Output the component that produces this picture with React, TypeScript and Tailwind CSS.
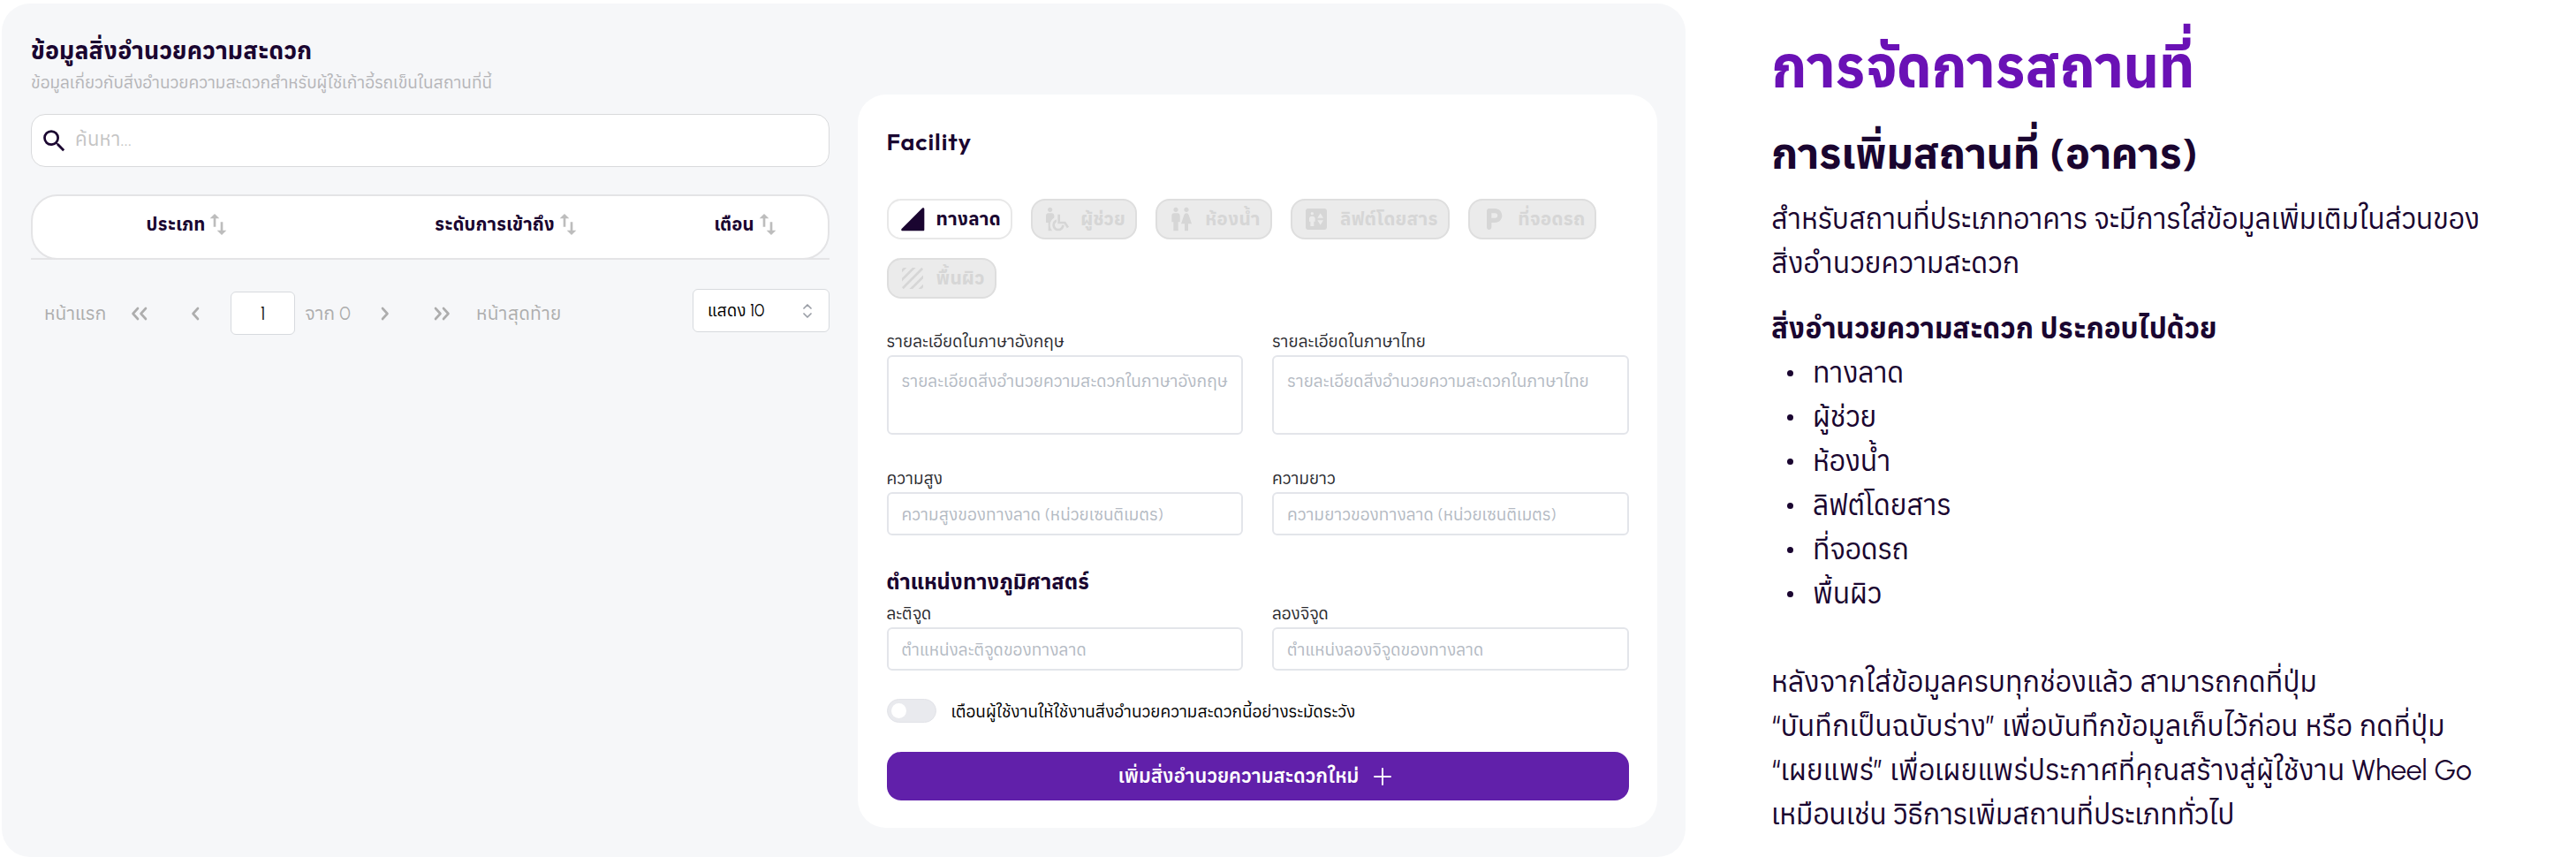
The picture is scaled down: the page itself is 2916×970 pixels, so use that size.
import type { ReactNode } from "react";
import { MdSearch, MdSwapVert, MdWheelchairPickup, MdWc, MdElevator, MdTexture } from "react-icons/md";

function RampIcon() {
  return (
    <svg viewBox="0 0 24 24" className="size-8 fill-current">
      <path d="M20.3 2.7 2.7 20.3c-.6.6-.2 1.700.7 1.700H21c.6 0 1-.4 1-1V3.400c0-.9-1.100-1.300-1.700-.7z" />
    </svg>
  );
}

function ParkingIcon() {
  return (
    <svg viewBox="0 0 24 24" className="size-8 fill-current">
      <path d="M13 3H8C6.900 3 6 3.900 6 5v14c0 1.100.9 2 2 2s2-.9 2-2v-4h3c3.300 0 6-2.700 6-6s-2.700-6-6-6zm.2 8H10V7h3.200c1.100 0 2 .9 2 2s-.9 2-2 2z" />
    </svg>
  );
}

const chips: { label: string; icon: ReactNode }[] = [
  { label: "ทางลาด", icon: <RampIcon /> },
  { label: "ผู้ช่วย", icon: <MdWheelchairPickup className="size-8" /> },
  { label: "ห้องน้ำ", icon: <MdWc className="size-8" /> },
  { label: "ลิฟต์โดยสาร", icon: <MdElevator className="size-8" /> },
  { label: "ที่จอดรถ", icon: <ParkingIcon /> },
  { label: "พื้นผิว", icon: <MdTexture className="size-8" /> },
];

function Chevron({ double = false, flip = false }: { double?: boolean; flip?: boolean }) {
  return (
    <svg
      viewBox={double ? "0 0 20 16" : "0 0 10 16"}
      className={`h-4 shrink-0 fill-none stroke-[#adadad] ${double ? "w-5" : "w-2.5"} ${flip ? "-scale-x-100" : ""}`}
      strokeWidth="2.6"
      strokeLinecap="round"
      strokeLinejoin="round"
    >
      <path d="M8 2 2.500 8 8 14" />
      {double && <path d="M17 2 11.500 8 17 14" />}
    </svg>
  );
}

function Field({ label, placeholder, tall = false }: { label: string; placeholder: string; tall?: boolean }) {
  return (
    <div className="flex flex-col whitespace-nowrap">
      <div className="text-[19px] leading-[30px] text-[#2b2b30]">{label}</div>
      <div
        className={`rounded-[6px] border-2 border-[#e3e5ea] bg-white px-[15px] text-[19px] leading-[28px] tracking-[0.05px] text-[#b4bac3] ${tall ? "h-[90px] pt-[14px]" : "h-[49px] pt-[9.500px]"}`}
      >
        {placeholder}
      </div>
    </div>
  );
}

function Column({ label }: { label: string }) {
  return (
    <div className="flex items-center justify-center">
      <span className="text-[20.500px] leading-[32px] font-bold tracking-[0.1px] whitespace-nowrap">{label}</span>
      <MdSwapVert className="-ml-px size-8 shrink-0 text-[#bdbdbd]" />
    </div>
  );
}

function FacilityList() {
  return (
    <section className="flex w-[904px] flex-col pt-[34px] whitespace-nowrap">
      <h2 className="text-[27px] leading-[40px] font-bold tracking-[0.15px]">ข้อมูลสิ่งอำนวยความสะดวก</h2>
      <p className="text-[19px] leading-[32px] text-[#b5b5b8]">ข้อมูลเกี่ยวกับสิ่งอำนวยความสะดวกสำหรับผู้ใช้เก้าอี้รถเข็นในสถานที่นี้</p>
      <div className="mt-[19px] flex h-[60px] items-center gap-[7px] rounded-[16px] border border-[#d9dadc] bg-white pl-[9px]">
        <MdSearch className="size-[33px]" />
        <span className="pb-[2px] text-[22px] leading-[32px] tracking-[0.3px] text-[#c4c4c4]">ค้นหา...</span>
      </div>
      <div className="mt-[31px] border-b-2 border-[#e4e4e6]">
        <div className="-mb-[2px] grid h-[74px] grid-cols-[355px_367px_175px] rounded-[30px] border-2 border-[#e4e4e6] bg-white pb-[6px]">
          <Column label="ประเภท" />
          <Column label="ระดับการเข้าถึง" />
          <Column label="เตือน" />
        </div>
      </div>
      <div className="mt-[33px] flex justify-between text-[21px] leading-[32px] text-[#adadad]">
        <div className="flex h-[52px] items-center pt-[3px] pl-[15px]">
          <div className="w-[98px]">หน้าแรก</div>
          <Chevron double />
          <div className="ml-[48px] flex">
            <Chevron />
          </div>
          <div className="mr-[11px] ml-[35px] flex h-[49px] w-[73px] items-center justify-center rounded-[6px] border border-[#d7dade] bg-white text-[21px] text-[#1a1a1a]">1</div>
          <div className="w-[86px]">จาก 0</div>
          <Chevron flip />
          <div className="ml-[49px] flex">
            <Chevron double flip />
          </div>
          <div className="ml-[29px] tracking-[0.2px]">หน้าสุดท้าย</div>
        </div>
        <div className="flex h-[49px] w-[155px] items-center justify-between rounded-[6px] border border-[#d7dade] bg-white pr-[18px] pl-[16px] text-[19px] text-black">
          แสดง 10
          <svg viewBox="0 0 12 16" className="h-4 w-3 fill-none stroke-[#9a9ea6]" strokeWidth="1.7" strokeLinecap="round" strokeLinejoin="round">
            <path d="M2 5 6 1l4 4M2 11l4 4 4-4" />
          </svg>
        </div>
      </div>
    </section>
  );
}

function FacilityForm() {
  return (
    <section className="mt-[103px] ml-[32px] flex h-[830px] w-[905px] flex-col rounded-[32px] bg-white px-[32.500px] pt-[33px]">
      <h2 className="font-['Outfit','Urbanist',sans-serif] text-[27px] leading-[40px] font-semibold tracking-[0.9px]">Facility</h2>
      <div className="mt-[45px] flex flex-wrap gap-x-[21.500px] gap-y-[21px]">
        {chips.map((chip, i) => (
          <div
            key={chip.label}
            className={`flex h-[46px] items-center gap-[11px] rounded-[16px] border-2 px-[11px] ${
              i === 0 ? "border-[#e8e8e8] bg-white text-[#1a0530]" : "border-[#dedede] bg-[#ebebeb] text-[#d6d6d6]"
            }`}
          >
            {chip.icon}
            <span className="text-[21px] leading-[32px] font-bold tracking-[0.15px] whitespace-nowrap">{chip.label}</span>
          </div>
        ))}
      </div>
      <div className="mt-[34px] grid grid-cols-2 gap-x-[33px] gap-y-[35px]">
        <Field tall label="รายละเอียดในภาษาอังกฤษ" placeholder="รายละเอียดสิ่งอำนวยความสะดวกในภาษาอังกฤษ" />
        <Field tall label="รายละเอียดในภาษาไทย" placeholder="รายละเอียดสิ่งอำนวยความสะดวกในภาษาไทย" />
        <Field label="ความสูง" placeholder="ความสูงของทางลาด (หน่วยเซนติเมตร)" />
        <Field label="ความยาว" placeholder="ความยาวของทางลาด (หน่วยเซนติเมตร)" />
      </div>
      <h3 className="mt-[34px] text-[24px] leading-[38px] font-bold">ตำแหน่งทางภูมิศาสตร์</h3>
      <div className="mt-[2px] grid grid-cols-2 gap-x-[33px]">
        <Field label="ละติจูด" placeholder="ตำแหน่งละติจูดของทางลาด" />
        <Field label="ลองจิจูด" placeholder="ตำแหน่งลองจิจูดของทางลาด" />
      </div>
      <div className="mt-[32px] flex h-[27px] items-center gap-[17px]">
        <div className="flex h-[27px] w-[56px] items-center rounded-full border border-[#e2e3e8] bg-[#e9eaee] pl-[4px]">
          <div className="size-[17px] rounded-full bg-white" />
        </div>
        <span className="pt-[2px] text-[19px] leading-[28px] whitespace-nowrap text-black">เตือนผู้ใช้งานให้ใช้งานสิ่งอำนวยความสะดวกนี้อย่างระมัดระวัง</span>
      </div>
      <button className="mt-[33px] flex h-[55px] items-center justify-center gap-[17px] rounded-[16px] bg-[#6120aa] pr-[6px] text-white">
        <span className="text-[22px] leading-[32px] font-semibold">เพิ่มสิ่งอำนวยความสะดวกใหม่</span>
        <svg viewBox="0 0 20 20" className="size-5 fill-none stroke-white" strokeWidth="2" strokeLinecap="round">
          <path d="M10 1v18M1 10h18" />
        </svg>
      </button>
    </section>
  );
}

const kinds = ["ทางลาด", "ผู้ช่วย", "ห้องน้ำ", "ลิฟต์โดยสาร", "ที่จอดรถ", "พื้นผิว"];

function Guide() {
  return (
    <article className="flex flex-col pt-[33px] pl-[97px] text-[32px] leading-[50px] whitespace-nowrap">
      <h1 className="text-[64px] leading-[80px] font-bold tracking-[-0.4px] text-[#6a11b5]">การจัดการสถานที่</h1>
      <h2 className="mt-[27px] text-[48px] leading-[60px] font-bold tracking-[-0.4px]">การเพิ่มสถานที่ (อาคาร)</h2>
      <p className="mt-[19px] tracking-[-0.15px]">
        สำหรับสถานที่ประเภทอาคาร จะมีการใส่ข้อมูลเพิ่มเติมในส่วนของ
        <br />
        <span className="tracking-[0.1px]">สิ่งอำนวยความสะดวก</span>
      </p>
      <h3 className="mt-6 font-bold">สิ่งอำนวยความสะดวก ประกอบไปด้วย</h3>
      <ul>
        {kinds.map((kind) => (
          <li key={kind} className="flex items-center gap-[22px] pl-[18px] tracking-[-0.15px]">
            <span className="size-[7px] rounded-full bg-current" />
            {kind}
          </li>
        ))}
      </ul>
      <p className="mt-[50px]">
        หลังจากใส่ข้อมูลครบทุกช่องแล้ว สามารถกดที่ปุ่ม
        <br />
        <span className="tracking-[0.09px]">“บันทึกเป็นฉบับร่าง” เพื่อบันทึกข้อมูลเก็บไว้ก่อน หรือ กดที่ปุ่ม</span>
        <br />
        <span className="tracking-[0.09px]">“เผยแพร่” เพื่อเผยแพร่ประกาศที่คุณสร้างสู่ผู้ใช้งาน Wheel Go</span>
        <br />
        <span className="tracking-[-0.15px]">เหมือนเช่น วิธีการเพิ่มสถานที่ประเภททั่วไป</span>
      </p>
    </article>
  );
}

export default function App() {
  return (
    <main className="flex h-[970px] w-[2916px] overflow-hidden bg-white pt-1 pl-0.5 font-['Urbanist','Anuphan','Noto_Sans_Thai','Noto_Sans',sans-serif] text-[#1a0530]">
      <div className="flex h-[966px] w-[1906px] shrink-0 rounded-[32px] bg-[#f6f7f9] pl-[33px]">
        <FacilityList />
        <FacilityForm />
      </div>
      <Guide />
    </main>
  );
}
